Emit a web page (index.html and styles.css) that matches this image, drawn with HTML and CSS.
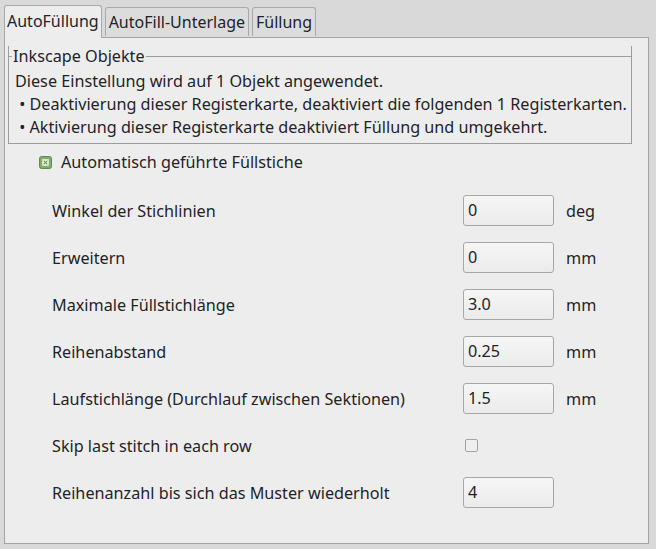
FILE: index.html
```html
<!DOCTYPE html>
<html>
<head>
<meta charset="utf-8">
<link rel="stylesheet" href="styles.css">
</head>
<body>
<div class="window">
  <div class="tabs">
    <div class="tab active">AutoFüllung</div>
    <div class="tab">AutoFill-Unterlage</div>
    <div class="tab">Füllung</div>
  </div>
  <div class="panel">
    <div class="frame">
      <div class="frame-label">Inkscape Objekte</div>
      <div class="frame-body">
        <div class="line">Diese Einstellung wird auf 1 Objekt angewendet.</div>
        <div class="line"> • Deaktivierung dieser Registerkarte, deaktiviert die folgenden 1 Registerkarten.</div>
        <div class="line"> • Aktivierung dieser Registerkarte deaktiviert Füllung und umgekehrt.</div>
      </div>
    </div>
    <div class="enable">
      <span class="check checked">
        <svg width="13" height="13" viewBox="0 0 13 13"><rect x="0.5" y="0.5" width="12" height="12" rx="2" fill="#84ab6c" stroke="#5e8c4c"/><rect x="3.5" y="3.5" width="6" height="6" fill="#f4f7f0" stroke="#f4f7f0" stroke-width="0.5"/><path d="M4.6 4.6 L8.4 8.4 M8.4 4.6 L4.6 8.4" stroke="#6f9a58" stroke-width="1.2"/></svg>
      </span>
      <span class="enable-label">Automatisch geführte Füllstiche</span>
    </div>
    <div class="rows">
      <div class="row"><span class="label">Winkel der Stichlinien</span><span class="input">0</span><span class="unit">deg</span></div>
      <div class="row"><span class="label">Erweitern</span><span class="input">0</span><span class="unit">mm</span></div>
      <div class="row"><span class="label">Maximale Füllstichlänge</span><span class="input">3.0</span><span class="unit">mm</span></div>
      <div class="row"><span class="label">Reihenabstand</span><span class="input">0.25</span><span class="unit">mm</span></div>
      <div class="row"><span class="label">Laufstichlänge (Durchlauf zwischen Sektionen)</span><span class="input">1.5</span><span class="unit">mm</span></div>
      <div class="row"><span class="label">Skip last stitch in each row</span><span class="cbcell"><span class="check empty"></span></span><span class="unit"></span></div>
      <div class="row"><span class="label">Reihenanzahl bis sich das Muster wiederholt</span><span class="input">4</span><span class="unit"></span></div>
    </div>
  </div>
</div>
</body>
</html>
```
FILE: styles.css
```css
html, body {
  margin: 0;
  padding: 0;
  background: #d9d9d9;
}
body {
  font-family: "Noto Sans", sans-serif;
  font-size: 16px;
  color: #1f2328;
  width: 656px;
  height: 549px;
  overflow: hidden;
}
.window {
  padding: 5px 7px 0 4px;
}
.tabs {
  display: flex;
  align-items: flex-end;
  height: 32px;
  position: relative;
  z-index: 2;
}
.tab {
  box-sizing: border-box;
  height: 29px;
  padding: 0 3px;
  margin-right: 3px;
  border: 1px solid #a9a9a9;
  border-bottom: none;
  border-radius: 3px 3px 0 0;
  background: #dcdcdc;
  line-height: 28px;
  margin-bottom: 1px;
}
.tab.active {
  height: 33px;
  margin-bottom: -1px;
  background: #ededed;
  line-height: 31px;
  padding: 0 2px;
}
.panel {
  box-sizing: border-box;
  height: 507px;
  border: 1px solid #a4a4a4;
  background: #ededed;
  padding: 9px 16px 0 3px;
  font-size: 16.2px;
}
.frame {
  border: 1px solid #9c9c9c;
  border-top: none;
  position: relative;
}
.frame-label {
  display: flex;
  align-items: center;
  height: 20px;
  line-height: 20px;
  margin-left: -1px;
  margin-top: -1px;
}
.frame-label::before {
  content: "";
  width: 4px;
  border-top: 1px solid #9c9c9c;
  align-self: center;
  margin-right: 1px;
}
.frame-label::after {
  content: "";
  flex: 1;
  border-top: 1px solid #9c9c9c;
  align-self: center;
  margin-left: 1px;
  margin-right: -1px;
}
.frame-body {
  padding: 4px 6px 4px 6px;
}
.line {
  height: 23px;
  line-height: 23px;
  white-space: pre;
}
.enable {
  display: flex;
  align-items: center;
  height: 24px;
  margin-top: 6px;
  padding-left: 31px;
}
.check {
  display: inline-block;
  width: 13px;
  height: 13px;
}
.check svg { display: block; }
.enable-label {
  margin-left: 9px;
}
.check.empty {
  box-sizing: border-box;
  border: 1px solid #a2a2a2;
  border-radius: 2px;
  background: #efefef;
}
.rows {
  display: flex;
  flex-direction: column;
  gap: 16px;
  margin-top: 21px;
  padding-left: 44px;
}
.row {
  display: flex;
  align-items: center;
  height: 31px;
}
.label {
  width: 411px;
}
.input {
  box-sizing: border-box;
  width: 91px;
  height: 31px;
  border: 1px solid #a7a7a7;
  border-radius: 3px;
  background: linear-gradient(#f6f6f6, #ebebeb);
  padding-left: 4px;
  line-height: 29px;
}
.cbcell {
  width: 91px;
  padding-left: 2px;
  display: flex;
  align-items: center;
}
.unit {
  margin-left: 12px;
}
```
